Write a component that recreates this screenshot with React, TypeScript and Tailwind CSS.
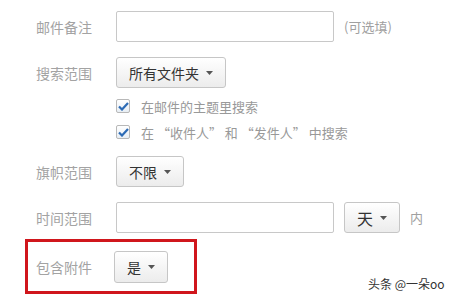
import React from "react";

const FONT = { fontFamily: '"Noto Sans CJK SC", "Noto Sans", sans-serif' };

function Caret() {
  return (
    <svg width="7" height="4" viewBox="0 0 7 4" aria-hidden className="flex-none">
      <path d="M0 0h7L3.5 4z" fill="#555" />
    </svg>
  );
}

function DropButton({ label, className = "" }: { label: string; className?: string }) {
  return (
    <button
      type="button"
      className={`flex h-[31px] items-center gap-[7px] rounded-[3px] border border-[#c6c6c6] bg-gradient-to-b from-white to-[#ececec] px-[12px] text-[14px] leading-none text-[#333] ${className}`}
    >
      <span>{label}</span>
      <Caret />
    </button>
  );
}

function Label({ children }: { children: React.ReactNode }) {
  return <div className="w-[80px] flex-none text-[14px] leading-none text-[#a3a3a3]">{children}</div>;
}

function Check({ text }: { text: string }) {
  return (
    <label className="flex h-[26px] items-center gap-[11px]">
      <span className="flex h-[14px] w-[14px] flex-none items-center justify-center rounded-[2px] border border-[#b8b8b8] bg-gradient-to-b from-white to-[#e8eef4]">
        <svg width="11" height="9" viewBox="0 0 11 9" aria-hidden>
          <path d="M1 4.5l3 3L10 1" stroke="#2d6bb5" strokeWidth="2.2" fill="none" />
        </svg>
      </span>
      <span className="text-[13px] leading-none text-[#999]">{text}</span>
    </label>
  );
}

export default function App() {
  return (
    <div className="relative h-[300px] w-[450px] overflow-hidden bg-white" style={FONT}>
      <div className="flex flex-col pt-[11px]">
        <div className="flex items-center pl-[36px]">
          <Label>邮件备注</Label>
          <div className="h-[31px] w-[218px] rounded-[2px] border border-[#c8c8c8] bg-white" />
          <span className="ml-[10px] text-[13px] text-[#a0a0a0]">(可选填)</span>
        </div>

        <div className="mt-[15px] flex items-center pl-[36px]">
          <Label>搜索范围</Label>
          <DropButton label="所有文件夹" />
        </div>

        <div className="mt-[5px] flex flex-col pl-[116px]">
          <Check text="在邮件的主题里搜索" />
          <Check text="在 “收件人” 和 “发件人” 中搜索" />
        </div>

        <div className="mt-[11px] flex items-center pl-[36px]">
          <Label>旗帜范围</Label>
          <DropButton label="不限" />
        </div>

        <div className="mt-[15px] flex items-center pl-[36px]">
          <Label>时间范围</Label>
          <div className="h-[31px] w-[218px] rounded-[2px] border border-[#c8c8c8] bg-white" />
          <DropButton label="天" className="ml-[10px] text-[16px]" />
          <span className="ml-[10px] text-[13px] text-[#a0a0a0]">内</span>
        </div>

        <div className="ml-[25px] mt-[6px] flex h-[55px] w-[172px] items-center border-[3px] border-[#d0161c] pl-[8px]">
          <Label>包含附件</Label>
          <DropButton label="是" className="-ml-[2px] h-[32px]" />
        </div>
      </div>

      <span className="absolute left-[368px] top-[278px] text-[12px] leading-none text-[#333]">头条 @一朵oo</span>
    </div>
  );
}
